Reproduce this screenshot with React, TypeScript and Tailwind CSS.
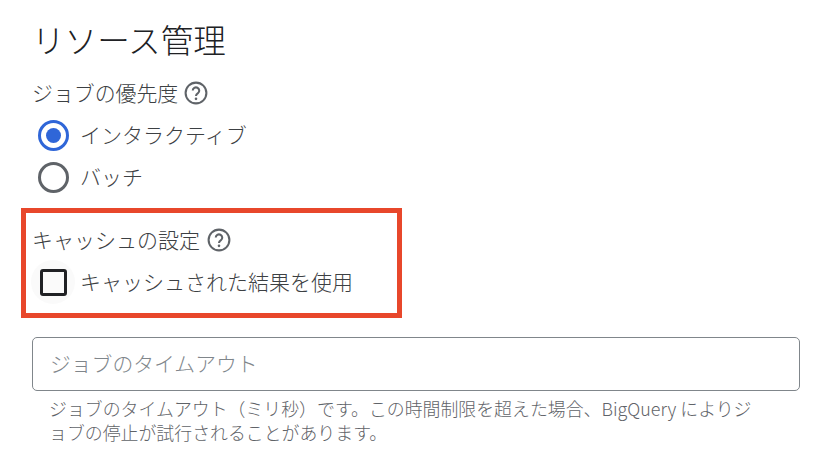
const font = "font-['Noto_Sans_CJK_JP','Noto_Sans',sans-serif] font-light"

function HelpIcon() {
  return (
    <svg width="26" height="26" viewBox="0 0 24 24" fill="none" className="shrink-0">
      <circle cx="12" cy="12" r="9.6" stroke="#5f6368" strokeWidth="1.9" />
      <path d="M9 9.8a3 3 0 1 1 4.8 2.4c-1 .7-1.8 1.3-1.8 2.6" stroke="#5f6368" strokeWidth="1.9" />
      <circle cx="12" cy="17.4" r="1.2" fill="#5f6368" />
    </svg>
  )
}

function Radio({ checked, label }: { checked?: boolean; label: string }) {
  return (
    <div className="flex items-center h-[42px] pl-[38px]">
      <div className={`w-[31px] h-[31px] rounded-full border-[3px] flex items-center justify-center ${checked ? 'border-[#2f66d8]' : 'border-[#5f6368]'}`}>
        {checked && <div className="w-[15px] h-[15px] rounded-full bg-[#2f66d8]" />}
      </div>
      <span className="ml-[11px] text-[21px] text-[#3c4043]">{label}</span>
    </div>
  )
}

export default function App() {
  return (
    <main className={`w-[830px] h-[466px] bg-white overflow-hidden pt-[15px] ${font}`}>
      <h1 className="pl-[32px] text-[32.6px] leading-[48px] text-[#202124]">リソース管理</h1>

      <div className="flex items-center gap-[5px] pl-[32px] mt-[12px] h-[36px]">
        <span className="text-[20.9px] text-[#3c4043]">ジョブの優先度</span>
        <HelpIcon />
      </div>

      <div className="mt-[3px]">
        <Radio checked label="インタラクティブ" />
        <Radio label="バッチ" />
      </div>

      <section className="ml-[21px] mt-[10px] w-[381px] h-[110px] border-[5px] border-[#e8472b] pl-[5px] pt-[9px]">
        <div className="flex items-center gap-[6px] h-[36px] pl-[1px]">
          <span className="text-[21px] text-[#3c4043]">キャッシュの設定</span>
          <HelpIcon />
        </div>
        <div className="flex items-center mt-[2px]">
          <div className="w-[44px] h-[44px] rounded-full bg-[#fafafa] flex items-center justify-center">
            <div className="w-[27px] h-[27px] rounded-[3px] border-[3px] border-[#202124]" />
          </div>
          <span className="ml-[5px] text-[21px] text-[#3c4043]">キャッシュされた結果を使用</span>
        </div>
      </section>

      <div className="ml-[32px] mt-[19px] w-[768px] h-[54px] border border-[#80868b] rounded-[5px] flex items-center pl-[17px]">
        <span className="text-[20.8px] text-[#80868b]">ジョブのタイムアウト</span>
      </div>

      <p className="ml-[49px] mt-[5px] w-[712px] text-[17.9px] leading-[24px] text-[#5f6368]">
        ジョブのタイムアウト（ミリ秒）です。この時間制限を超えた場合、BigQuery によりジョブの停止が試行されることがあります。
      </p>
    </main>
  )
}
